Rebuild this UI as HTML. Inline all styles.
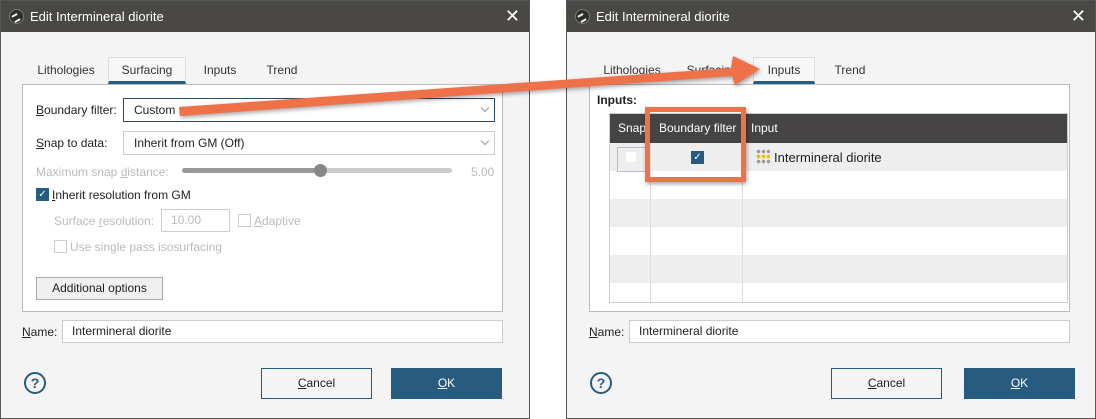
<!DOCTYPE html>
<html><head><style>
*{box-sizing:border-box;margin:0;padding:0}
body{width:1096px;height:419px;background:#fff;font-family:"Liberation Sans",sans-serif;font-size:12px;color:#222;position:relative;overflow:hidden}
.dlg{position:absolute;top:0;width:530px;height:419px;background:#f4f4f4;border:1px solid #555}
.title{position:absolute;left:0;top:0;right:0;height:31px;background:#4a4845;color:#fff;font-size:13px;line-height:31px;padding-left:29px}
.ico{position:absolute;left:8px;top:8px;width:15px;height:15px;border-radius:50%;background:#2e2d2b;border:1px solid #777}
.ico:after{content:"";position:absolute;left:3px;top:4px;width:6px;height:4px;border-top:2px solid #eee;border-bottom:2px solid #eee;transform:rotate(-30deg)}
.x{position:absolute;right:9px;top:0;font-size:18px;color:#fff;line-height:31px}
.a{position:absolute}
.tab{position:absolute;top:56px;height:27px;line-height:27px;text-align:center;color:#333}
.tab.on{background:#f7f7f7;border:1px solid #ddd;border-bottom:3px solid #275b80;line-height:25px}
.panel{position:absolute;top:83px;height:228px;background:#fff;border:1px solid #bbb}
.combo{position:absolute;background:#fff;border:1px solid #ccc;height:24px;line-height:22px;padding-left:10px}
.combo:after{content:"";position:absolute;right:6px;top:6px;width:5px;height:5px;border-right:1px solid #999;border-bottom:1px solid #999;transform:rotate(45deg)}
.dis{color:#bbb}
.cb{position:absolute;width:13px;height:13px;border:1px solid #ccc;background:#fff}
.cbon{position:absolute;width:13px;height:13px;background:#275b80;color:#fff;font-size:10px;line-height:13px;text-align:center}
.btn{position:absolute;border:1px solid #aaa;background:#f0f0f0;text-align:center}
.field{position:absolute;background:#fff;border:1px solid #ccc;height:23px;line-height:21px;padding-left:9px}
.help{position:absolute;width:22px;height:22px;border:2px solid #275b80;border-radius:50%;color:#275b80;font-weight:bold;text-align:center;line-height:18px;font-size:14px}
.cancel{position:absolute;top:367px;width:111px;height:31px;border:1px solid #275b80;background:#f4f4f4;text-align:center;line-height:29px}
.ok{position:absolute;top:367px;width:111px;height:31px;background:#275b80;color:#fff;text-align:center;line-height:31px}
u{text-decoration:underline}
</style></head><body>

<div class="dlg" style="left:0">
<div class="title"><div class="ico"></div>Edit Intermineral diorite<span class="x">✕</span></div>
<div class="tab" style="left:30px;width:70px">Lithologies</div>
<div class="tab on" style="left:107px;width:78px">Surfacing</div>
<div class="tab" style="left:190px;width:58px">Inputs</div>
<div class="tab" style="left:252px;width:58px">Trend</div>
<div class="panel" style="left:21px;width:481px"></div>
<div class="a" style="left:35px;top:102px"><u>B</u>oundary filter:</div>
<div class="combo" style="left:122px;top:97px;width:372px;border-color:#2a4a66">Custom</div>
<div class="a" style="left:35px;top:135px"><u>S</u>nap to data:</div>
<div class="combo" style="left:122px;top:130px;width:372px">Inherit from GM (Off)</div>
<div class="a dis" style="left:35px;top:164px">Maximum snap <u>d</u>istance:</div>
<div class="a" style="left:181px;top:167px;width:140px;height:5px;border-radius:3px;background:#999"></div>
<div class="a" style="left:321px;top:167px;width:130px;height:5px;border-radius:3px;background:#ccc"></div>
<div class="a" style="left:313px;top:163px;width:13px;height:13px;border-radius:50%;background:#888"></div>
<div class="a dis" style="left:470px;top:164px">5.00</div>
<div class="cbon" style="left:35px;top:187px">✓</div>
<div class="a" style="left:51px;top:187px"><u>I</u>nherit resolution from GM</div>
<div class="a dis" style="left:53px;top:213px">Surface <u>r</u>esolution:</div>
<div class="field dis" style="left:160px;top:208px;width:69px;padding-left:9px">10.00</div>
<div class="cb" style="left:237px;top:213px"></div>
<div class="a dis" style="left:253px;top:213px"><u>A</u>daptive</div>
<div class="cb" style="left:53px;top:239px"></div>
<div class="a dis" style="left:69px;top:239px">Use single pass isosurfacing</div>
<div class="btn" style="left:35px;top:276px;width:127px;height:23px;line-height:21px">Additional options</div>
<div class="a" style="left:21px;top:324px"><u>N</u>ame:</div>
<div class="field" style="left:61px;top:319px;width:441px">Intermineral diorite</div>
<div class="help" style="left:23px;top:371px">?</div>
<div class="cancel" style="left:260px"><u>C</u>ancel</div>
<div class="ok" style="left:390px"><u>O</u>K</div>
</div>

<div class="dlg" style="left:566px">
<div class="title"><div class="ico"></div>Edit Intermineral diorite<span class="x">✕</span></div>
<div class="tab" style="left:30px;width:70px">Lithologies</div>
<div class="tab" style="left:115px;width:60px">Surfacing</div>
<div class="tab on" style="left:186px;width:62px">Inputs</div>
<div class="tab" style="left:252px;width:62px">Trend</div>
<div class="panel" style="left:22px;width:481px"></div>
<div class="a" style="left:30px;top:92px;font-weight:bold">Inputs:</div>
<div class="a" style="left:42px;top:112px;width:459px;height:190px;background:#fff;border:1px solid #ccc;overflow:hidden">
 <div class="a" style="left:0;top:0;width:459px;height:29px;background:#454343"></div>
 <div class="a" style="left:0;top:29px;width:459px;height:28px;background:#eee"></div>
 <div class="a" style="left:0;top:85px;width:459px;height:28px;background:#eee"></div>
 <div class="a" style="left:0;top:141px;width:459px;height:28px;background:#eee"></div>
 <div class="a" style="left:40px;top:29px;width:1px;height:170px;background:#ddd"></div>
 <div class="a" style="left:132px;top:29px;width:1px;height:170px;background:#ddd"></div>
 <div class="a" style="left:8px;top:7px;color:#fff">Snap</div>
 <div class="a" style="left:49px;top:7px;color:#fff">Boundary filter</div>
 <div class="a" style="left:141px;top:7px;color:#fff">Input</div>
 <div class="a" style="left:7px;top:33px;width:29px;height:25px;border:1px solid #bbc;background:#eee"></div>
 <div class="a" style="left:16px;top:38px;width:10px;height:10px;background:#fff"></div>
 <div class="cbon" style="left:81px;top:37px">✓</div>
 <div class="a" style="left:146px;top:35px;width:14px;height:16px;background:radial-gradient(circle,#999 1.5px,transparent 2px) 0 0/5px 5px"></div>
 <div class="a" style="left:146px;top:40px;width:14px;height:5px;background:radial-gradient(circle,#f2c200 1.5px,transparent 2px) 0 0/5px 5px"></div>
 <div class="a" style="left:164px;top:36px;font-size:13px">Intermineral diorite</div>
</div>
<div class="a" style="left:78px;top:106px;width:101px;height:75px;border:5px solid #ef7148;box-shadow:1px 2px 4px rgba(0,0,0,.35)"></div>
<div class="a" style="left:22px;top:324px"><u>N</u>ame:</div>
<div class="field" style="left:62px;top:319px;width:441px">Intermineral diorite</div>
<div class="help" style="left:23px;top:371px">?</div>
<div class="cancel" style="left:264px"><u>C</u>ancel</div>
<div class="ok" style="left:397px"><u>O</u>K</div>
</div>

<svg class="a" style="left:0;top:0;filter:drop-shadow(1px 2px 2px rgba(0,0,0,.35))" width="1096" height="419">
<polygon points="179,107 731,68 733,56 760,69 735,85 732,76 180,116" fill="#ef7148"/>
</svg>
</body></html>
